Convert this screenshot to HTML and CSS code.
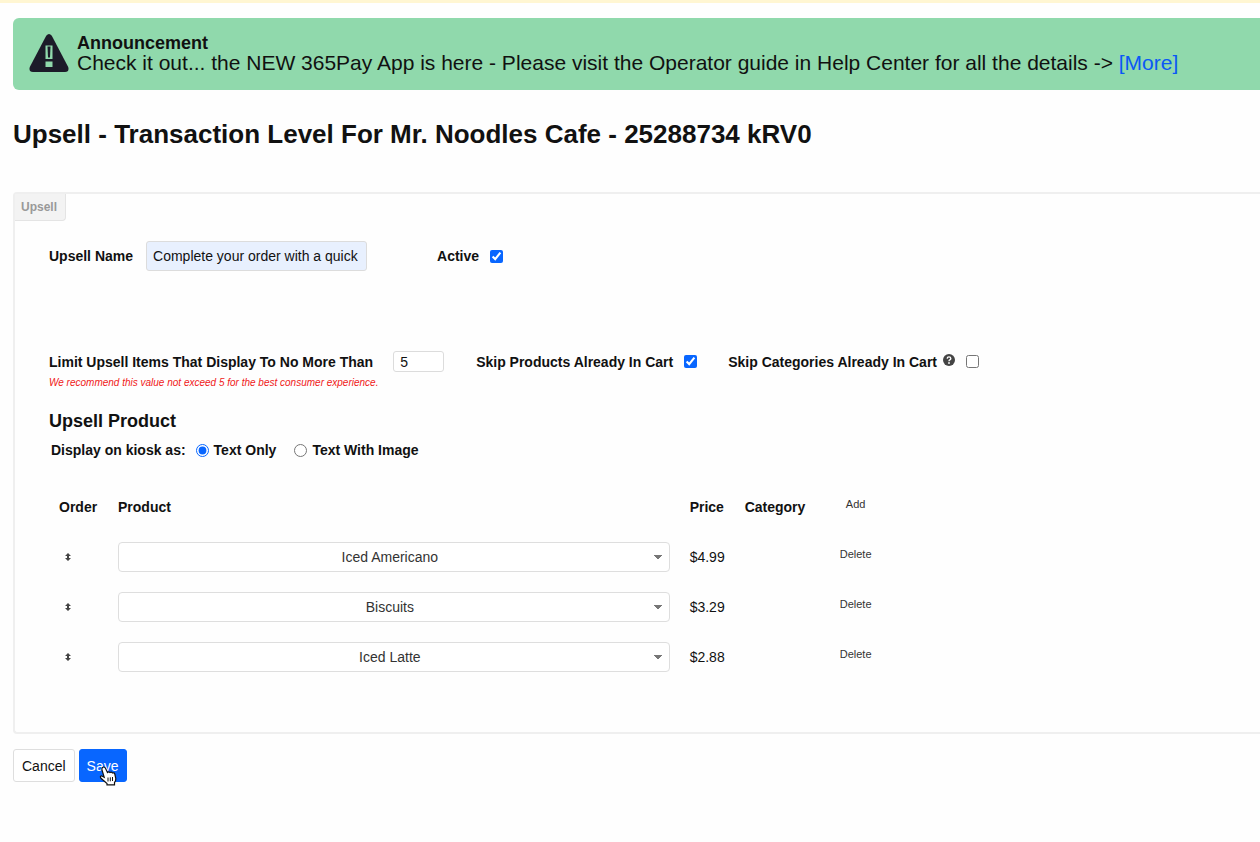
FILE: index.html
```html
<!DOCTYPE html>
<html lang="en">
<head>
  <meta charset="UTF-8" />
  <meta name="viewport" content="width=device-width, initial-scale=1.0"/>
  <title>Upsell - Transaction Level</title>
  <link rel="stylesheet" href="styles.css">
</head>
<body>
  <div class="announcement">
    <svg class="warning-icon" viewBox="0 0 40 38" aria-hidden="true">
      <path d="M17.2 1.8Q20 -1.6 22.8 1.8L39.2 33Q40.6 37.6 36 38H4Q-0.6 37.6 0.8 33Z" fill="#1c1b29"/>
      <path d="M16.5 11.5h7v13.5h-7zM16.5 27.5h7v5.5h-7z" fill="#90d9ac"/>
      <path d="M18.5 12.5h3l-0.5 11h-2z" fill="#1c1b29"/>
    </svg>
    <div class="announcement-text">
      <strong>Announcement</strong>
      <p>Check it out... the NEW 365Pay App is here - Please visit the Operator guide in Help Center for all the details -&gt; <a href="#">[More]</a></p>
    </div>
  </div>

  <h1>Upsell - Transaction Level For Mr. Noodles Cafe - 25288734 kRV0</h1>

  <form id="upsellForm">
    <div class="panel">
      <span class="tab">Upsell</span>

      <div class="panel-body">
        <div class="row name-row">
          <label for="upsellName">Upsell Name</label>
          <input type="text" class="name-input" id="upsellName" value="Complete your order with a quick snack" />
          <label class="check" for="active">Active <input type="checkbox" id="active" checked /></label>
        </div>

        <div class="row limit-row">
          <label for="limit">Limit Upsell Items That Display To No More Than</label>
          <input type="text" class="limit-input" id="limit" value="5" />
          <label class="check" for="skipProducts">Skip Products Already In Cart <input type="checkbox" id="skipProducts" checked /></label>
          <label class="check categories" for="skipCategories">Skip Categories Already In Cart
            <svg class="help-icon" viewBox="0 0 12 12" aria-hidden="true">
              <circle cx="6" cy="6" r="6" fill="#444"/>
              <path d="M4.2 4.6Q4.3 2.9 6 2.9T7.8 4.5Q7.8 5.4 6.8 5.9Q6 6.3 6 7.2" fill="none" stroke="#fff" stroke-width="1.4"/>
              <circle cx="6" cy="9" r="0.9" fill="#fff"/>
            </svg>
            <input type="checkbox" id="skipCategories" />
          </label>
        </div>
        <p class="hint">We recommend this value not exceed 5 for the best consumer experience.</p>

        <h2>Upsell Product</h2>
        <div class="row display-row" role="radiogroup" aria-labelledby="displayLabel">
          <span id="displayLabel">Display on kiosk as:</span>
          <label><input type="radio" name="display" value="text" checked /> Text Only</label>
          <label><input type="radio" name="display" value="image" /> Text With Image</label>
        </div>

        <table class="products">
          <thead>
            <tr>
              <th class="order">Order</th>
              <th>Product</th>
              <th class="price">Price</th>
              <th class="category">Category</th>
              <th class="action"><button type="button">Add</button></th>
            </tr>
          </thead>
          <tbody>
            <tr>
              <td class="order"><svg class="sort-icon" viewBox="0 0 6 8"><path d="M3 0L6 3H4V5H6L3 8L0 5H2V3H0Z"/></svg></td>
              <td><select aria-label="Product 1"><option>Iced Americano</option></select></td>
              <td class="price">$4.99</td>
              <td class="category"></td>
              <td class="action"><button type="button">Delete</button></td>
            </tr>
            <tr>
              <td class="order"><svg class="sort-icon" viewBox="0 0 6 8"><path d="M3 0L6 3H4V5H6L3 8L0 5H2V3H0Z"/></svg></td>
              <td><select aria-label="Product 2"><option>Biscuits</option></select></td>
              <td class="price">$3.29</td>
              <td class="category"></td>
              <td class="action"><button type="button">Delete</button></td>
            </tr>
            <tr>
              <td class="order"><svg class="sort-icon" viewBox="0 0 6 8"><path d="M3 0L6 3H4V5H6L3 8L0 5H2V3H0Z"/></svg></td>
              <td><select aria-label="Product 3"><option>Iced Latte</option></select></td>
              <td class="price">$2.88</td>
              <td class="category"></td>
              <td class="action"><button type="button">Delete</button></td>
            </tr>
          </tbody>
        </table>
      </div>
    </div>

    <div class="buttons">
      <button type="button" class="btn">Cancel</button>
      <div class="save-wrap">
        <button type="submit" class="btn btn-primary">Save</button>
        <svg class="pointer" viewBox="0 0 18 20" aria-hidden="true">
          <path d="M3.5 1.5Q5 0.3 6.3 2L8.5 6.5Q9.8 5.2 11 6.5Q12.5 5.5 13.5 7Q15.2 6.3 15.8 8L16.8 12.5Q17 15 15.5 16.5V18.8H8V17.5L2 12.3Q0.5 10.3 2.5 9.8L5.2 11.2L3 4Q2.5 2.5 3.5 1.5Z" fill="#fff" stroke="#111" stroke-width="1.2"/>
          <path d="M9 11.5V15.5M11.3 11.3V15.3M13.5 11V15" stroke="#111" stroke-width="1"/>
        </svg>
      </div>
    </div>
  </form>
</body>
</html>
```

FILE: styles.css
```css
* {
  box-sizing: border-box;
}

body {
  margin: 0;
  padding: 15px 0 60px 13px;
  border-top: 3px solid #fff6d2;
  background: #fefefe;
  color: #111;
  font-family: "Liberation Sans", Arial, Helvetica, sans-serif;
  font-size: 14px;
  line-height: 20px;
}

input, select, button {
  font-family: inherit;
  font-size: 14px;
  color: inherit;
}

.announcement {
  display: flex;
  align-items: flex-start;
  gap: 8px;
  padding: 16px;
  border-radius: 6px 0 0 6px;
  background: #90d9ac;
}

.warning-icon {
  flex: none;
  width: 40px;
  height: 38px;
}

.announcement-text {
  font-size: 21px;
  line-height: 22px;
}

.announcement-text strong {
  display: block;
  font-size: 18px;
  line-height: 18px;
}

.announcement-text p {
  margin: 0;
}

.announcement-text a {
  color: #0a58f5;
  text-decoration: none;
}

h1 {
  margin: 28px 0 42px;
  font-size: 26px;
  line-height: 32px;
}

.panel {
  border: 2px solid #efefef;
  border-right: none;
  border-radius: 4px 0 0 4px;
}

.tab {
  display: block;
  width: max-content;
  padding: 3px 8px 3px 6px;
  border-right: 1px solid #e4e4e4;
  border-bottom: 1px solid #e4e4e4;
  border-radius: 0 0 4px 0;
  background: #f3f3f3;
  color: #999;
  font-size: 12px;
  font-weight: bold;
}

.panel-body {
  padding: 20px 34px 50px;
  font-weight: bold;
}

.row {
  display: flex;
  align-items: center;
}

.check {
  display: flex;
  align-items: center;
}

input[type="checkbox"], input[type="radio"] {
  width: 13px;
  height: 13px;
  margin: 0;
  accent-color: #0866ff;
}

.check input {
  margin-left: 11px;
}

input[type="text"] {
  border: 1px solid #dcdcdc;
  border-radius: 3px;
  padding: 0 6px;
}

.name-input {
  width: 221px;
  height: 30px;
  margin: 0 70px 0 13px;
  background: #e8f0fe;
}

.limit-row {
  margin-top: 80px;
}

.limit-input {
  width: 51px;
  height: 21px;
  margin: 0 32px 0 20px;
}

.categories {
  margin-left: 31px;
}

.help-icon {
  width: 12px;
  height: 12px;
  margin: 0 0 4px 6px;
}

.hint {
  margin: 4px 0 20px;
  color: #f01818;
  font-size: 10px;
  font-style: italic;
  font-weight: normal;
  line-height: 14px;
}

h2 {
  margin: 0 0 8px;
  font-size: 18px;
  line-height: 22px;
}

.display-row {
  padding-left: 2px;
}

.display-row label {
  display: flex;
  align-items: center;
  gap: 5px;
  margin-left: 10px;
}

.display-row label + label {
  margin-left: 18px;
}

.products {
  width: 71%;
  margin-top: 22px;
  border-collapse: collapse;
  table-layout: fixed;
}

.products th, .products td {
  height: 50px;
  padding: 0 10px;
  text-align: left;
}

.products td {
  font-weight: normal;
}

.products .order {
  width: 59px;
}

.products .price {
  width: 55px;
}

.products .category {
  width: 92px;
}

.products .action {
  width: 58px;
  padding: 0 0 8px;
  text-align: center;
}

.products .action button {
  padding: 0;
  border: none;
  background: none;
  color: #333;
  font-size: 11px;
  cursor: pointer;
}

.sort-icon {
  display: block;
  width: 6px;
  height: 8px;
  margin-left: 6px;
  fill: #444;
}

select {
  display: block;
  width: 100%;
  height: 30px;
  padding: 0 12px 0 4px;
  appearance: none;
  border: 1px solid #dedede;
  border-radius: 4px;
  background: conic-gradient(from -39deg at 50% 100%, #777 78deg, transparent 0) right 7px center / 8px 5px no-repeat, #fff;
  color: #333;
  text-align: center;
  text-align-last: center;
}

.buttons {
  display: flex;
  gap: 4px;
  margin-top: 15px;
}

.btn {
  height: 33px;
  padding: 0 8px;
  border: 1px solid #dedede;
  border-radius: 3px;
  background: #fff;
  cursor: pointer;
}

.btn-primary {
  padding: 0 7px;
  border-color: #0866ff;
  background: #0866ff;
  color: #fff;
}

.save-wrap {
  position: relative;
}

/* hand pointer resting on the save button */
.pointer {
  position: absolute;
  left: 20px;
  top: 17px;
  width: 18px;
  height: 20px;
}
```
